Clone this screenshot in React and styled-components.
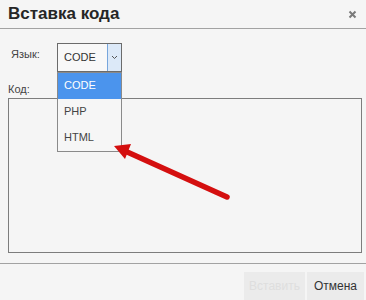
import React from "react";
import styled, { createGlobalStyle } from "styled-components";

const Global = createGlobalStyle`
  html, body { margin: 0; padding: 0; background: #f5f5f5; }
  body { font-family: "Liberation Sans", Arial, sans-serif; color: #333; }
  * { box-sizing: border-box; }
`;

const Dialog = styled.div`
  position: relative;
  width: 366px;
  height: 300px;
  overflow: hidden;
  background: #f5f5f5;
  display: flex;
  flex-direction: column;
`;

const Header = styled.div`
  height: 29px;
  padding: 0 9px 0 8px;
  border-bottom: 1px solid #a2a2a2;
  display: flex;
  align-items: center;
  justify-content: space-between;
`;

const Title = styled.h1`
  margin: 0;
  font-size: 17px;
  line-height: 28px;
  font-weight: bold;
  color: #262626;
`;

const Close = styled.button`
  border: 0;
  background: none;
  padding: 0;
  width: 9px;
  height: 9px;
  display: flex;
  cursor: pointer;
`;

const Body = styled.div`
  padding: 14px 4px 0 8px;
  display: flex;
  flex-direction: column;
`;

const Row = styled.div`
  display: flex;
  align-items: flex-start;
`;

const Label = styled.label`
  font-size: 11px;
  line-height: 13px;
  color: #444;
  padding: ${(p) => p.$pad || "0"};
  width: ${(p) => p.$w || "auto"};
  margin: ${(p) => p.$m || "0"};
`;

const SelectWrap = styled.div`
  position: relative;
  width: 65px;
`;

const SelectBox = styled.div`
  height: 29px;
  border: 1px solid #6b6b6b;
  background: #f8f8f8;
  display: flex;
  align-items: stretch;
`;

const SelectValue = styled.span`
  flex: 1;
  padding-left: 6px;
  font-size: 11px;
  line-height: 27px;
  color: #333;
`;

const ArrowBox = styled.span`
  width: 14px;
  background: #dce9f8;
  border-left: 1px solid #77a6dc;
  display: flex;
  align-items: center;
  justify-content: center;
`;

const List = styled.ul`
  position: absolute;
  top: 29px;
  left: 0;
  width: 65px;
  margin: 0;
  padding: 0;
  list-style: none;
  border: 1px solid #8a8a8a;
  background: #f6f6f6;
  z-index: 2;
`;

const Option = styled.li`
  height: 26px;
  padding-left: 6px;
  font-size: 11px;
  line-height: 25px;
  color: ${(p) => (p.$active ? "#fff" : "#444")};
  background: ${(p) => (p.$active ? "#4b94ed" : "transparent")};
`;

const TextArea = styled.textarea`
  width: 354px;
  height: 155px;
  margin-top: 2px;
  border: 1px solid #7d7d7d;
  background: #f5f5f5;
  resize: none;
  outline: none;
`;

const Footer = styled.div`
  margin-top: 10px;
  border-top: 1px solid #a2a2a2;
  padding: 8px 2px 0 0;
  display: flex;
  justify-content: flex-end;
  gap: 2px;
`;

const Button = styled.button`
  height: 28px;
  width: ${(p) => p.$w}px;
  border: 0;
  background: #ebebeb;
  font-family: "Liberation Sans", Arial, sans-serif;
  font-size: 12px;
  color: ${(p) => (p.disabled ? "#dedede" : "#333")};
  padding: 0;
`;

const Arrow = styled.svg`
  position: absolute;
  left: 0;
  top: 0;
  pointer-events: none;
  z-index: 3;
`;

export default function App() {
  return (
    <>
      <Global />
      <Dialog>
        <Header>
          <Title>Вставка кода</Title>
          <Close aria-label="close">
            <svg width="9" height="9" viewBox="0 0 9 9">
              <path d="M1.5 1.5 L7.5 7.5 M7.5 1.5 L1.5 7.5" stroke="#7a7a7a" strokeWidth="2" />
            </svg>
          </Close>
        </Header>
        <Body>
          <Row>
            <Label $pad="5px 0 0 3px" $w="49px">Язык:</Label>
            <SelectWrap>
              <SelectBox>
                <SelectValue>CODE</SelectValue>
                <ArrowBox>
                  <svg width="7" height="5" viewBox="0 0 7 5">
                    <path d="M1 1 L3.5 3.5 L6 1" fill="none" stroke="#555" strokeWidth="1" />
                  </svg>
                </ArrowBox>
              </SelectBox>
              <List>
                <Option $active>CODE</Option>
                <Option>PHP</Option>
                <Option>HTML</Option>
              </List>
            </SelectWrap>
          </Row>
          <Label $m="11px 0 0 0">Код:</Label>
          <TextArea />
        </Body>
        <Footer>
          <Button $w={61} disabled>Вставить</Button>
          <Button $w={57}>Отмена</Button>
        </Footer>
        <Arrow width="366" height="300" viewBox="0 0 366 300">
          <line x1="227" y1="197" x2="125" y2="151" stroke="#d40f0f" strokeWidth="5.5" strokeLinecap="round" />
          <polygon points="114,146 131,144 125,159" fill="#d40f0f" />
        </Arrow>
      </Dialog>
    </>
  );
}
